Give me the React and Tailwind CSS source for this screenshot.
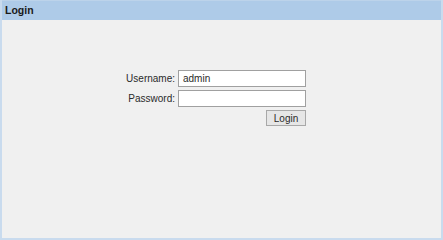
export default function App() {
  return (
    <div className="w-[443px] h-[240px] bg-[#eef0f3] flex flex-col">
      <div className="flex-1 flex flex-col border-2 border-[#c9dbee] border-t-0 bg-[#f0f0f0]">
        <div className="h-[20px] bg-[#aecbe8] border-t border-[#bcd3ea] flex items-center px-[3px]">
          <span className="font-['Liberation_Sans',Arial,sans-serif] font-bold text-[10.5px] text-[#1a1a1a]">Login</span>
        </div>
        <div className="flex-1 flex pt-[50px] pl-[124px]">
          <div className="flex flex-col gap-[3px] font-['Liberation_Sans',Arial,sans-serif] text-[10px] text-[#2a2a2a]">
            <div className="flex items-center gap-[3px]">
              <span className="w-[49px] text-right whitespace-nowrap">Username:</span>
              <div className="w-[128px] h-[17px] bg-white border border-[#a0a0a0] flex items-center px-[4px]">admin</div>
            </div>
            <div className="flex items-center gap-[3px]">
              <span className="w-[49px] text-right whitespace-nowrap">Password:</span>
              <div className="w-[128px] h-[17px] bg-white border border-[#a0a0a0]"></div>
            </div>
            <div className="flex justify-end">
              <div className="w-[40px] h-[16px] bg-[#e6e6e6] border border-[#a8a8a8] flex items-center justify-center">Login</div>
            </div>
          </div>
        </div>
      </div>
    </div>
  );
}
